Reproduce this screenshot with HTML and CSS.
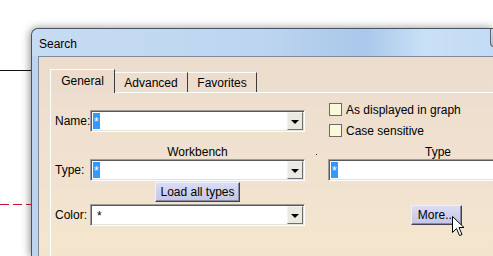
FILE: index.html
```html
<!DOCTYPE html>
<html lang="en">
<head>
  <meta charset="UTF-8" />
  <title>Search</title>
  <link rel="stylesheet" href="styles.css">
</head>
<body>
  <div class="line line-black"></div>
  <div class="line line-red"></div>

  <div class="window">
    <div class="titlebar">
      <span class="title">Search</span>
      <span class="close-btn"></span>
    </div>
    <div class="frame">
      <div class="client">
        <div class="tabs">
          <div class="tab active">General</div>
          <div class="tab">Advanced</div>
          <div class="tab">Favorites</div>
        </div>

        <div class="panel">
          <div class="grid">
            <!-- row 1 -->
            <div class="label name-label">Name:</div>
            <div class="combo name-combo">
              <span class="value selected">*</span>
              <span class="drop"></span>
            </div>
            <div></div>
            <div class="checks">
              <label class="check"><span class="box"></span>As displayed in graph</label>
              <label class="check"><span class="box"></span>Case sensitive</label>
            </div>

            <!-- row 2 -->
            <div></div>
            <div class="heading">Workbench</div>
            <div class="dot-cell"><span class="dot"></span></div>
            <div class="heading">Type</div>

            <!-- row 3 -->
            <div class="label">Type:</div>
            <div class="combo">
              <span class="value selected">*</span>
              <span class="drop"></span>
            </div>
            <div></div>
            <div class="combo wide">
              <span class="value selected">*</span>
            </div>

            <!-- row 4 -->
            <div></div>
            <div class="btn-cell"><button class="btn">Load all types</button></div>
            <div></div>
            <div></div>

            <!-- row 5 -->
            <div class="label">Color:</div>
            <div class="combo">
              <span class="value plain">*</span>
              <span class="drop"></span>
            </div>
            <div></div>
            <div class="btn-cell more-cell"><button class="btn more">More...</button></div>
          </div>
        </div>
      </div>
    </div>
  </div>

  <svg class="cursor" width="13" height="21" viewBox="0 0 13 21">
    <path d="M0.5 0.5 L0.5 16.5 L4.5 12.5 L7.5 19.5 L10 18.5 L7 11.5 L12 11.5 Z" fill="#fff" stroke="#000" stroke-width="1" stroke-linejoin="miter"/>
  </svg>
</body>
</html>
```

FILE: styles.css
```css
body {
  margin: 0;
  width: 493px;
  height: 256px;
  overflow: hidden;
  background: #fff;
  font-family: "Liberation Sans", Arial, sans-serif;
  font-size: 12px;
  color: #000;
  position: relative;
}

/* lines of the drawing behind the dialog */
.line {
  position: absolute;
  left: 0;
  width: 60px;
}
.line-black {
  top: 70px;
  border-top: 1px solid #111;
}
.line-red {
  top: 204px;
  height: 1px;
  background: repeating-linear-gradient(90deg, #c8102e 0 9px, transparent 9px 13px);
}

/* the dialog runs past the right and bottom edges of the screen */
.window {
  position: absolute;
  left: 31px;
  top: 28px;
  width: 462px;
  height: 228px;
  overflow: hidden;
  border: 1px solid #4a5360;
  border-right: none;
  border-bottom: none;
  border-radius: 7px 0 0 0;
  background: #bcd4ee;
  box-shadow: -1px 0 9px rgba(0, 0, 0, 0.45);
}

.titlebar {
  height: 27px;
  display: flex;
  align-items: flex-start;
  padding-left: 7px;
  border-radius: 6px 0 0 0;
  background: linear-gradient(90deg, #c6dcf3 0%, #bdd5ef 50%, #a9c8ea 72%, #c9e0f6 85%, #c3dbf4 100%);
}
.title {
  flex: 1;
  line-height: 14px;
  margin-top: 8px;
}
.close-btn {
  flex: 0 0 auto;
  width: 3px;
  height: 17px;
  border: 1px solid #5c6470;
  border-top: none;
  border-right: none;
  border-radius: 0 0 0 4px;
  background: linear-gradient(#d6dbe2, #b9c0ca);
}

.frame {
  padding-left: 6px;
  height: 201px;
}
.client {
  height: 100%;
  border: 1px solid #7d8a9a;
  border-right: none;
  border-bottom: none;
  overflow: hidden;
  background: linear-gradient(#ecdcce, #f1e2d0 60%, #f4e6cd);
}

.tabs {
  display: flex;
  align-items: flex-end;
  margin: 12px 0 0 11px;
  height: 23px;
  position: relative;
  z-index: 1;
}
.tab {
  height: 20px;
  line-height: 20px;
  box-sizing: border-box;
  border-top: 1px solid #fff;
  border-right: 1px solid #3c3c3c;
  text-align: center;
}
.tab:nth-child(2) { width: 73px; }
.tab:nth-child(3) { width: 69px; }
.tab.active {
  width: 65px;
  height: 24px;
  line-height: 22px;
  border-left: 1px solid #fff;
  margin-bottom: -1px;
  background: #ecdcce;
}

.panel {
  margin-left: 11px;
  height: 180px;
  border-top: 1px solid #fff;
  border-left: 1px solid #fff;
}

.grid {
  display: grid;
  grid-template-columns: 39px 215px 23px 220px;
  grid-template-rows: 44px 22px 22px 23px 22px;
}

.label {
  padding-left: 4px;
  align-self: end;
  line-height: 22px;
  height: 22px;
}
.name-label, .name-combo {
  margin-bottom: 5px;
}

.combo {
  box-sizing: border-box;
  height: 22px;
  align-self: end;
  display: flex;
  align-items: center;
  background: #fff;
  border: 1px solid;
  border-color: #9c9c9c #fff #fff #9c9c9c;
  box-shadow: inset 1px 1px #5a5a5a, inset -1px -1px #e4e2dc;
  padding: 1px 1px 1px 2px;
}
.combo.wide {
  width: 220px;
}
.value {
  height: 16px;
  line-height: 18px;
  flex: 1;
}
.value.selected {
  flex: 0 0 auto;
  background: #3399ff;
  color: #fff;
  padding: 0 1px;
  margin-right: auto;
}
.value.plain {
  padding-left: 4px;
}
.drop {
  width: 16px;
  height: 18px;
  box-sizing: border-box;
  background: #ece9e3;
  border: 1px solid;
  border-color: #f4f3ef #6f6f6f #6f6f6f #f4f3ef;
  display: flex;
  align-items: center;
  justify-content: center;
}
.drop::after {
  content: "";
  border-left: 4px solid transparent;
  border-right: 4px solid transparent;
  border-top: 4px solid #000;
  margin-top: 1px;
}

.checks {
  padding-top: 10px;
  padding-left: 1px;
}
.check {
  display: flex;
  align-items: center;
  height: 13px;
}
.check + .check {
  margin-top: 8px;
}
.check .box {
  width: 11px;
  height: 11px;
  border: 1px solid #6a6a6a;
  background: #fbf8dc;
  margin-right: 4px;
}

.heading {
  text-align: center;
  align-self: end;
  line-height: 14px;
}
.dot {
  display: block;
  width: 1px;
  height: 1px;
  background: #222;
  margin: 17px 0 0 11px;
}

.btn-cell {
  display: flex;
  justify-content: center;
  align-items: flex-start;
}
.btn {
  font-family: inherit;
  font-size: 12px;
  height: 20px;
  padding: 0 4px;
  margin-top: 1px;
  border: 1px solid;
  border-color: #f0f0fa #40404e #40404e #f0f0fa;
  box-shadow: inset -1px -1px #8a8aa6;
  background: linear-gradient(#dcdcf2, #c4c4e6);
  color: #000;
  line-height: 17px;
}
.more {
  width: 51px;
  padding: 0;
  margin-left: -3px;
}

.cursor {
  position: absolute;
  left: 452px;
  top: 216px;
}
```
